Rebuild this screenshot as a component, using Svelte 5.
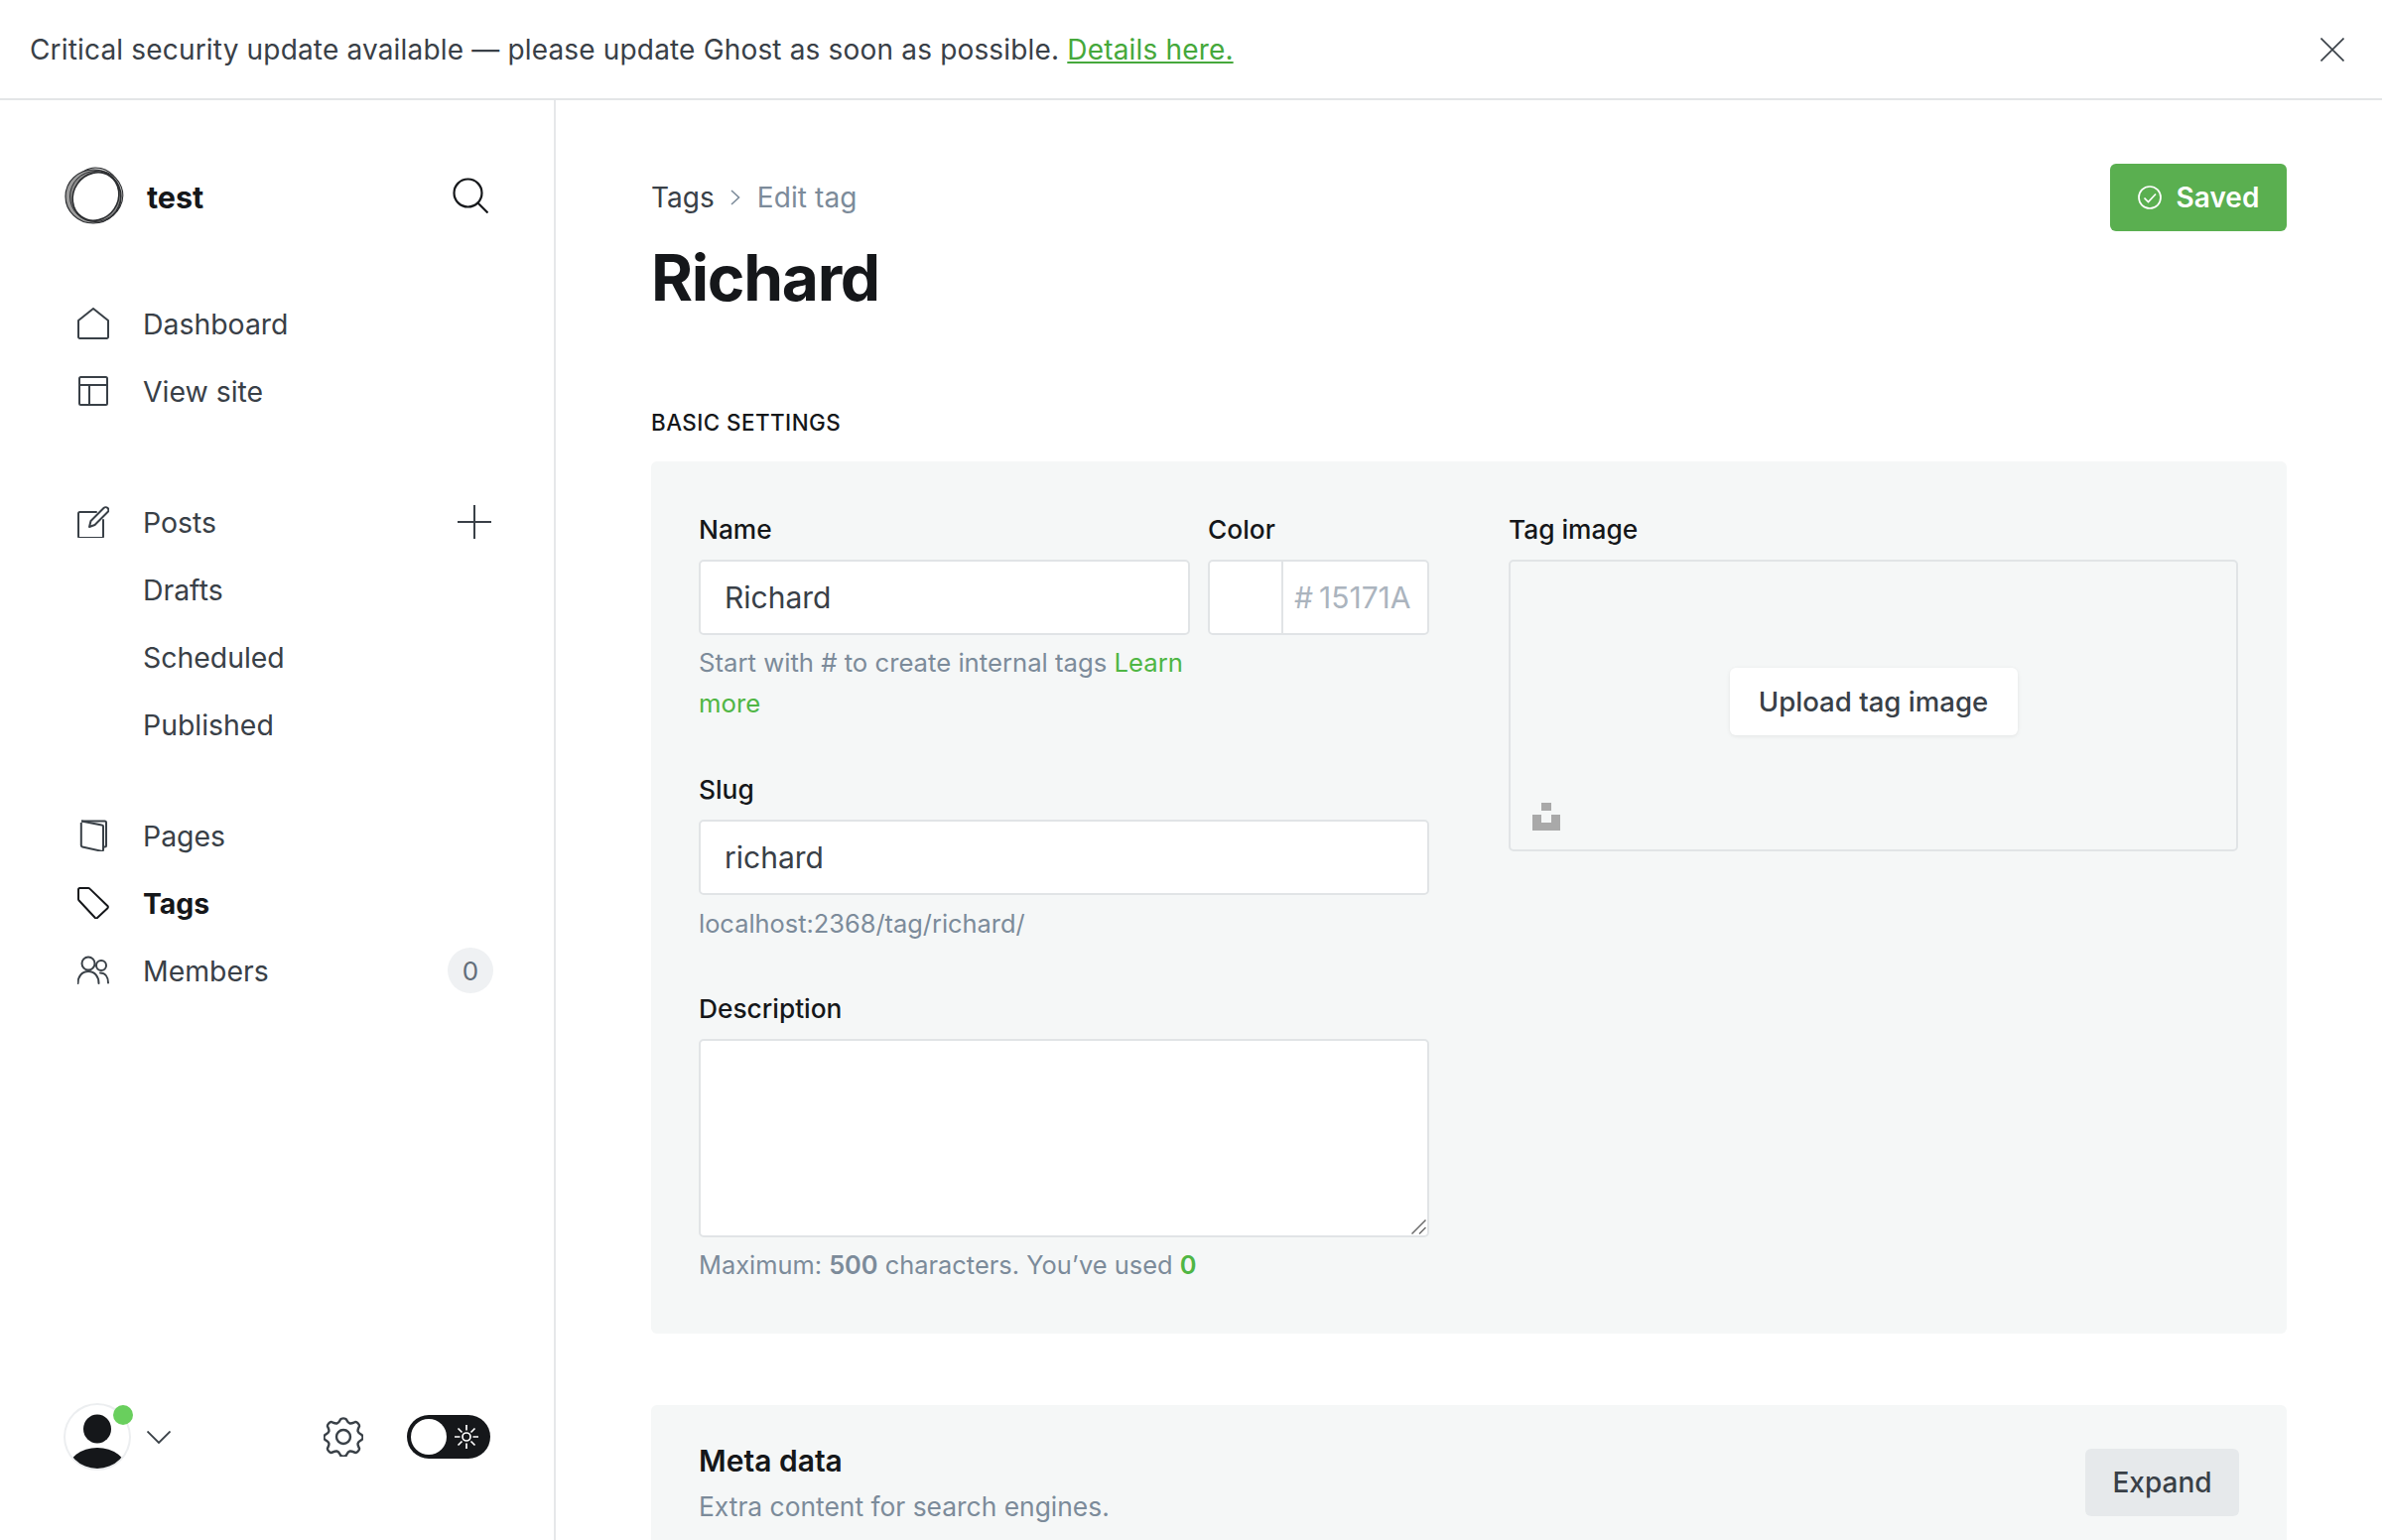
<script lang="ts">
  const mainNav = [
    { label: "Dashboard", icon: "home" },
    { label: "View site", icon: "layout" },
  ];
  const postViews = ["Drafts", "Scheduled", "Published"];
</script>

<div class="page">
  <div class="banner">
    <p>Critical security update available — please update Ghost as soon as possible. <a href="#details">Details here.</a></p>
    <button class="banner__close" aria-label="Close">
      <svg viewBox="0 0 24 24" width="24" height="24" fill="none" stroke="#394047" stroke-width="1.6"><path d="M0.5 0.5l23 23M23.5 0.5l-23 23" /></svg>
    </button>
  </div>

  <div class="shell">
    <aside class="sidebar">
      <div class="brand">
        <svg class="brand__logo" viewBox="0 0 60 60" width="60" height="60" fill="none" stroke="#2a2c2f">
          <ellipse cx="34" cy="26" rx="22" ry="25" fill="#cfcfcf" stroke-width="1" transform="rotate(-35 34 26)" />
          <ellipse cx="31" cy="31" rx="28" ry="26" fill="#b4b4b4" stroke-width="1" transform="rotate(-20 31 31)" />
          <ellipse cx="29" cy="31" rx="28" ry="27" fill="#9c9c9c" stroke-width="1.200" />
          <ellipse cx="31" cy="31" rx="25.500" ry="25.500" fill="#8a8a8a" stroke-width="1" />
          <ellipse cx="31.500" cy="31" rx="22.500" ry="25" fill="#fff" stroke-width="1.600" transform="rotate(35 31.500 31)" />
        </svg>
        <span class="brand__name">test</span>
        <svg class="brand__search" viewBox="0 0 36 36" width="36" height="36" fill="none" stroke="#15171a" stroke-width="2.2"><circle cx="15.5" cy="15.5" r="14" /><path d="M25.5 25.5L35.5 35.5" /></svg>
      </div>

      <nav class="nav">
        <ul>
          {#each mainNav as item}
            <li class="row">
              <span class="row__icon">
                {#if item.icon === "home"}
                  <svg viewBox="0 0 32 32" width="32" height="32" fill="none" stroke="#394047" stroke-width="2" stroke-linejoin="round"><path d="M1 13L16 1l15 12v16.500a1.500 1.500 0 0 1-1.500 1.500h-27A1.500 1.500 0 0 1 1 29.500z" /></svg>
                {:else}
                  <svg viewBox="0 0 32 32" width="32" height="32" fill="none" stroke="#394047" stroke-width="2" stroke-linejoin="round"><rect x="2" y="2" width="28" height="28" rx="1.500" /><path d="M2 10h28M12 10v20" /></svg>
                {/if}
              </span>
              <span>{item.label}</span>
            </li>
          {/each}
        </ul>

        <ul>
          <li class="row">
            <span class="row__icon">
              <svg viewBox="0 0 32 32" width="32" height="32" fill="none" stroke="#394047" stroke-width="2" stroke-linejoin="round" stroke-linecap="round"><path d="M19 6H2.500A1.500 1.500 0 0 0 1 7.500v23A1.500 1.500 0 0 0 2.500 32h22a1.500 1.500 0 0 0 1.500-1.500V14" /><path d="M12 21l1.500-6L26.500 2a2.800 2.800 0 0 1 4 4L17.500 19z" /></svg>
            </span>
            <span>Posts</span>
            <svg class="row__plus" viewBox="0 0 34 34" width="34" height="34" fill="none" stroke="#394047" stroke-width="2"><path d="M17 0v34M0 17h34" /></svg>
          </li>
          {#each postViews as view}
            <li class="row"><span class="row__icon"></span><span>{view}</span></li>
          {/each}
        </ul>

        <ul>
          <li class="row">
            <span class="row__icon">
              <svg viewBox="0 0 32 32" width="32" height="32" fill="none" stroke="#394047" stroke-width="2" stroke-linejoin="round"><path d="M4 1.500h23.500a1.500 1.500 0 0 1 1.500 1.500v23a1.500 1.500 0 0 1-1.500 1.500H26" /><path d="M4 1.500l20.500 4a1.500 1.500 0 0 1 1.500 1.500v23.500a1.500 1.500 0 0 1-2 1.200L5 27.500a1.500 1.500 0 0 1-1.200-1.500V3" /></svg>
            </span>
            <span>Pages</span>
          </li>
          <li class="row row--active">
            <span class="row__icon">
              <svg viewBox="0 0 32 32" width="32" height="32" fill="none" stroke="#15171a" stroke-width="2" stroke-linejoin="round"><path d="M1 2.500A1.500 1.500 0 0 1 2.500 1H11a2 2 0 0 1 1.400.6l18 17.400a1.500 1.500 0 0 1 0 2.200L20 31a1.500 1.500 0 0 1-2.100 0L1.600 13.500A2 2 0 0 1 1 12z" /></svg>
            </span>
            <span>Tags</span>
          </li>
          <li class="row">
            <span class="row__icon">
              <svg viewBox="0 0 32 32" width="32" height="32" fill="none" stroke="#394047" stroke-width="2" stroke-linecap="round"><circle cx="11" cy="9" r="6.500" /><path d="M0.500 29c0-7 4-12 10.500-12s10.500 5 10.500 12" /><circle cx="24" cy="11" r="5" /><path d="M23 18.500c5 0 8 4 8 10" /></svg>
            </span>
            <span>Members</span>
            <span class="row__count">0</span>
          </li>
        </ul>
      </nav>

      <div class="foot">
        <div class="avatar">
          <svg viewBox="0 0 68 68" width="68" height="68"><defs><clipPath id="avatar-clip"><circle cx="34" cy="34" r="32" /></clipPath></defs><g fill="#15171a" clip-path="url(#avatar-clip)"><ellipse cx="34" cy="26" rx="14" ry="14.500" /><ellipse cx="34" cy="68" rx="30" ry="23" /></g></svg>
          <span class="avatar__dot"></span>
        </div>
        <svg class="foot__chevron" viewBox="0 0 24 13" width="24" height="13" fill="none" stroke="#394047" stroke-width="1.800"><path d="M0.500 0.500L12 12L23.500 0.500" /></svg>
        <svg class="foot__gear" viewBox="0 0 40 40" width="40" height="40" fill="none" stroke="#394047" stroke-width="2.400" stroke-linejoin="round">
          <circle cx="20" cy="20" r="7" />
          <path d="M17 2.500c1-1.500 5-1.500 6 0 1 2 1.500 3.500 3.500 4 2.200.4 3.500-.7 5.500-1.500 1.700-.3 4.500 2.800 4 4.500-.8 1.800-2 3.200-1.300 5.200.7 1.900 2.500 2.300 4 3.500 1 1.500 1 3.500 0 4.600-1.500 1.200-3.300 1.600-4 3.500-.7 2 .5 3.400 1.300 5.200.5 1.700-2.300 4.800-4 4.500-2-.8-3.300-1.900-5.500-1.500-2 .5-2.500 2-3.500 4-1 1.500-5 1.500-6 0-1-2-1.500-3.500-3.500-4-2.200-.4-3.500.7-5.500 1.500-1.700.3-4.500-2.800-4-4.500.8-1.800 2-3.200 1.300-5.200-.7-1.900-2.500-2.300-4-3.500-1-1.100-1-3.100 0-4.600 1.500-1.200 3.300-1.600 4-3.500.7-2-.5-3.400-1.300-5.200-.5-1.700 2.300-4.800 4-4.500 2 .8 3.300 1.900 5.500 1.500 2-.5 2.500-2 3.500-4z" />
        </svg>
        <div class="toggle">
          <span class="toggle__knob"></span>
          <svg class="toggle__sun" viewBox="0 0 24 24" width="24" height="24" fill="none" stroke="#fff" stroke-width="1.700"><circle cx="12" cy="12" r="4" /><path d="M12 0v5.500M12 18.500V24M0 12h5.500M18.500 12H24M3.500 3.500l4 4M16.500 16.500l4 4M20.500 3.500l-4 4M7.500 16.500l-4 4" /></svg>
        </div>
      </div>
    </aside>

    <main class="main">
      <header class="head">
        <div>
          <div class="crumbs">
            <span class="crumbs__link">Tags</span>
            <svg viewBox="0 0 10 16" width="10" height="16" fill="none" stroke="#7c8b9a" stroke-width="1.600"><path d="M1 1l7.500 7L1 15" /></svg>
            <span class="crumbs__here">Edit tag</span>
          </div>
          <h1>Richard</h1>
        </div>
        <button class="saved">
          <svg viewBox="0 0 24 24" width="24" height="24" fill="none" stroke="#fff" stroke-width="1.700"><circle cx="12" cy="12" r="11" /><path d="M6.500 12.500l4 4 7.500-8" /></svg>
          <span>Saved</span>
        </button>
      </header>

      <h2 class="section-title">BASIC SETTINGS</h2>

      <section class="panel">
        <div class="form">
          <div class="name-row">
            <div class="field">
              <label for="tag-name">Name</label>
              <input id="tag-name" class="input" value="Richard" />
              <p class="hint hint--name">Start with # to create internal tags <a href="#learn">Learn more</a></p>
            </div>
            <div class="field">
              <span class="label">Color</span>
              <div class="color">
                <span class="color__swatch"></span>
                <span class="color__value"><span class="color__hash">#</span>15171A</span>
              </div>
            </div>
          </div>

          <div class="field field--slug">
            <label for="tag-slug">Slug</label>
            <input id="tag-slug" class="input" value="richard" />
            <p class="hint">localhost:2368/tag/richard/</p>
          </div>

          <div class="field field--desc">
            <label for="tag-desc">Description</label>
            <div class="area">
              <textarea id="tag-desc" class="input input--area"></textarea>
              <svg class="area__grip" viewBox="0 0 15 15" width="15" height="15" fill="none" stroke="#6b6b6b" stroke-width="1.500"><path d="M0.500 14.500l14-14M8 14.500l6.500-6.500" /></svg>
            </div>
            <p class="hint hint--count">Maximum: <b>500</b> characters. You’ve used <b class="used">0</b></p>
          </div>
        </div>

        <div class="field">
          <span class="label">Tag image</span>
          <div class="upload">
            <button class="upload__btn">Upload tag image</button>
            <svg class="upload__mark" viewBox="0 0 28 28" width="28" height="28" fill="#a9a9a9"><path d="M9 0h10v8H9zM0 12h9v8h10v-8h9v16H0z" /></svg>
          </div>
        </div>
      </section>

      <section class="panel panel--meta">
        <div>
          <h3>Meta data</h3>
          <p>Extra content for search engines.</p>
        </div>
        <button class="expand">Expand</button>
      </section>
    </main>
  </div>
</div>

<style>
  :global(body) {
    margin: 0;
    background: #fff;
  }

  .page {
    height: 1552px;
    overflow: hidden;
    display: flex;
    flex-direction: column;
    font-family: Inter, "Liberation Sans", sans-serif;
    color: #394047;
  }

  p, h1, h2, h3, ul {
    margin: 0;
    padding: 0;
  }

  button {
    font-family: inherit;
    border: 0;
    cursor: pointer;
  }

  .banner {
    flex: none;
    height: 101px;
    box-sizing: border-box;
    border-bottom: 2px solid #e3e5e7;
    padding: 0 38px 0 30px;
    display: flex;
    align-items: center;
    justify-content: space-between;
    font-size: 28px;
    letter-spacing: 0.17px;
  }

  .banner a {
    color: #45a83b;
    text-decoration: underline;
  }

  .banner__close {
    background: none;
    padding: 0;
    display: flex;
  }

  .shell {
    flex: 1;
    display: flex;
    min-height: 0;
  }

  .sidebar {
    flex: none;
    width: 560px;
    box-sizing: border-box;
    border-right: 2px solid #e6e8ea;
    padding: 66px 0 0;
    display: flex;
    flex-direction: column;
  }

  .brand {
    display: flex;
    align-items: center;
    padding: 0 66px 0 65px;
    height: 60px;
  }

  .brand__name {
    margin-left: 23px;
    margin-top: 2px;
    font-size: 30.500px;
    font-weight: 700;
    color: #15171a;
  }

  .brand__search {
    margin-left: auto;
  }

  .nav {
    margin-top: 65px;
    display: flex;
    flex-direction: column;
    gap: 64px;
  }

  .nav ul {
    list-style: none;
  }

  .nav ul:last-child {
    margin-top: -20px;
  }

  .row {
    height: 68px;
    display: flex;
    align-items: center;
    padding: 0 61px 0 78px;
    font-size: 28.400px;
  }

  .row__icon {
    width: 32px;
    height: 32px;
    margin-right: 34px;
    flex: none;
    display: flex;
  }

  .row--active {
    font-weight: 700;
    color: #15171a;
  }

  .row__plus {
    margin-left: auto;
    margin-right: 2px;
  }

  .row__count {
    margin-left: auto;
    width: 46px;
    height: 46px;
    border-radius: 50%;
    background: #eff1f3;
    display: flex;
    align-items: center;
    justify-content: center;
    font-size: 26px;
    color: #626d79;
  }

  .foot {
    margin-top: auto;
    margin-bottom: 70px;
    padding-left: 64px;
    display: flex;
    align-items: center;
  }

  .avatar {
    position: relative;
    width: 68px;
    height: 68px;
    box-sizing: border-box;
    border-radius: 50%;
    box-shadow: inset 0 0 0 2px #eceef0;
  }

  .avatar__dot {
    position: absolute;
    top: 2px;
    right: -2px;
    width: 20px;
    height: 20px;
    border-radius: 50%;
    background: #69cf5d;
  }

  .foot__chevron {
    margin-left: 16px;
  }

  .foot__gear {
    margin-left: 154px;
  }

  .toggle {
    margin-left: 44px;
    width: 84px;
    height: 44px;
    box-sizing: border-box;
    border-radius: 22px;
    background: #15171a;
    padding: 4px;
    display: flex;
    align-items: center;
    justify-content: space-between;
  }

  .toggle__knob {
    width: 36px;
    height: 36px;
    border-radius: 50%;
    background: #fff;
  }

  .toggle__sun {
    margin-right: 8px;
  }

  .main {
    flex: 1;
    min-width: 0;
    padding: 64px 96px 0;
  }

  .head {
    display: flex;
    justify-content: space-between;
    align-items: flex-start;
  }

  .crumbs {
    display: flex;
    align-items: center;
    height: 68px;
    gap: 15px;
    font-size: 28px;
  }

  .crumbs svg {
    margin-left: 1px;
    margin-right: 2px;
  }

  .crumbs__here {
    color: #7c8b9a;
    letter-spacing: 0.1px;
  }

  h1 {
    margin-top: 8px;
    font-size: 64px;
    font-weight: 700;
    letter-spacing: -0.02em;
    line-height: 78px;
    color: #15171a;
  }

  .saved {
    width: 178px;
    height: 68px;
    border-radius: 6px;
    background: #5aaf50;
    color: #fff;
    font-size: 28px;
    font-weight: 600;
    display: flex;
    align-items: center;
    justify-content: center;
    gap: 15px;
  }

  .section-title {
    margin-top: 93px;
    font-size: 22.400px;
    font-weight: 500;
    line-height: 28px;
    letter-spacing: 0.02em;
    color: #15171a;
  }

  .panel {
    margin-top: 25px;
    background: #f5f7f7;
    border-radius: 6px;
    padding: 48px;
    height: 879px;
    box-sizing: border-box;
    display: grid;
    grid-template-columns: 736px 735px;
    gap: 80px;
  }

  .form {
    min-width: 0;
  }

  .name-row {
    display: grid;
    grid-template-columns: 495px 223px;
    gap: 18px;
  }

  .field {
    display: flex;
    flex-direction: column;
    min-width: 0;
  }

  .field--slug {
    margin-top: 46px;
  }

  .field--desc {
    margin-top: 45px;
  }

  label, .label {
    font-size: 26.300px;
    font-weight: 500;
    line-height: 42px;
    height: 42px;
    margin-bottom: 9px;
    color: #15171a;
  }

  .input {
    box-sizing: border-box;
    width: 100%;
    height: 76px;
    border: 2px solid #e1e4e6;
    border-radius: 5px;
    background: #fff;
    padding: 0 24px;
    font-family: inherit;
    font-size: 30px;
    color: #394047;
    outline: none;
    display: block;
    margin: 0;
  }

  .area {
    position: relative;
    height: 200px;
  }

  .input--area {
    height: 200px;
    resize: none;
  }

  .area__grip {
    position: absolute;
    right: 3px;
    bottom: 3px;
  }

  .hint {
    margin-top: 8px;
    font-size: 25.400px;
    line-height: 41px;
    color: #7c8b9a;
  }

  .hint--name {
    font-size: 25.700px;
    line-height: 40.500px;
  }

  .hint--count {
    margin-top: 7px;
  }

  .hint a, .used {
    color: #4fb644;
    text-decoration: none;
  }

  .hint b {
    font-weight: 600;
  }

  .color {
    height: 76px;
    box-sizing: border-box;
    border: 2px solid #e1e4e6;
    border-radius: 5px;
    background: #fff;
    display: flex;
    align-items: center;
  }

  .color__swatch {
    width: 72px;
    height: 100%;
    border-right: 2px solid #e1e4e6;
  }

  .color__value {
    margin-left: 11px;
    font-size: 30px;
    color: #abb4be;
  }

  .color__hash {
    margin-right: 6px;
  }

  .upload {
    position: relative;
    height: 294px;
    box-sizing: border-box;
    border: 2px solid #e1e4e6;
    border-radius: 5px;
    display: flex;
    justify-content: center;
    padding-top: 107px;
  }

  .upload__btn {
    width: 290px;
    height: 68px;
    border-radius: 6px;
    background: #fff;
    box-shadow: 0 1px 4px rgba(0, 0, 0, 0.08);
    font-size: 27.600px;
    font-weight: 500;
    color: #394047;
  }

  .upload__mark {
    position: absolute;
    left: 22px;
    bottom: 19px;
  }

  .panel--meta {
    margin-top: 72px;
    height: 160px;
    padding: 36px 48px 0;
    display: flex;
    justify-content: space-between;
    align-items: flex-start;
  }

  .panel--meta h3 {
    font-size: 30px;
    font-weight: 600;
    line-height: 40px;
    color: #15171a;
  }

  .panel--meta p {
    margin-top: 6px;
    font-size: 26.400px;
    line-height: 40px;
    color: #7c8b9a;
  }

  .expand {
    margin-top: 8px;
    width: 155px;
    height: 68px;
    border-radius: 6px;
    background: #e6e9eb;
    color: #394047;
    font-size: 28px;
    font-weight: 500;
  }
</style>
